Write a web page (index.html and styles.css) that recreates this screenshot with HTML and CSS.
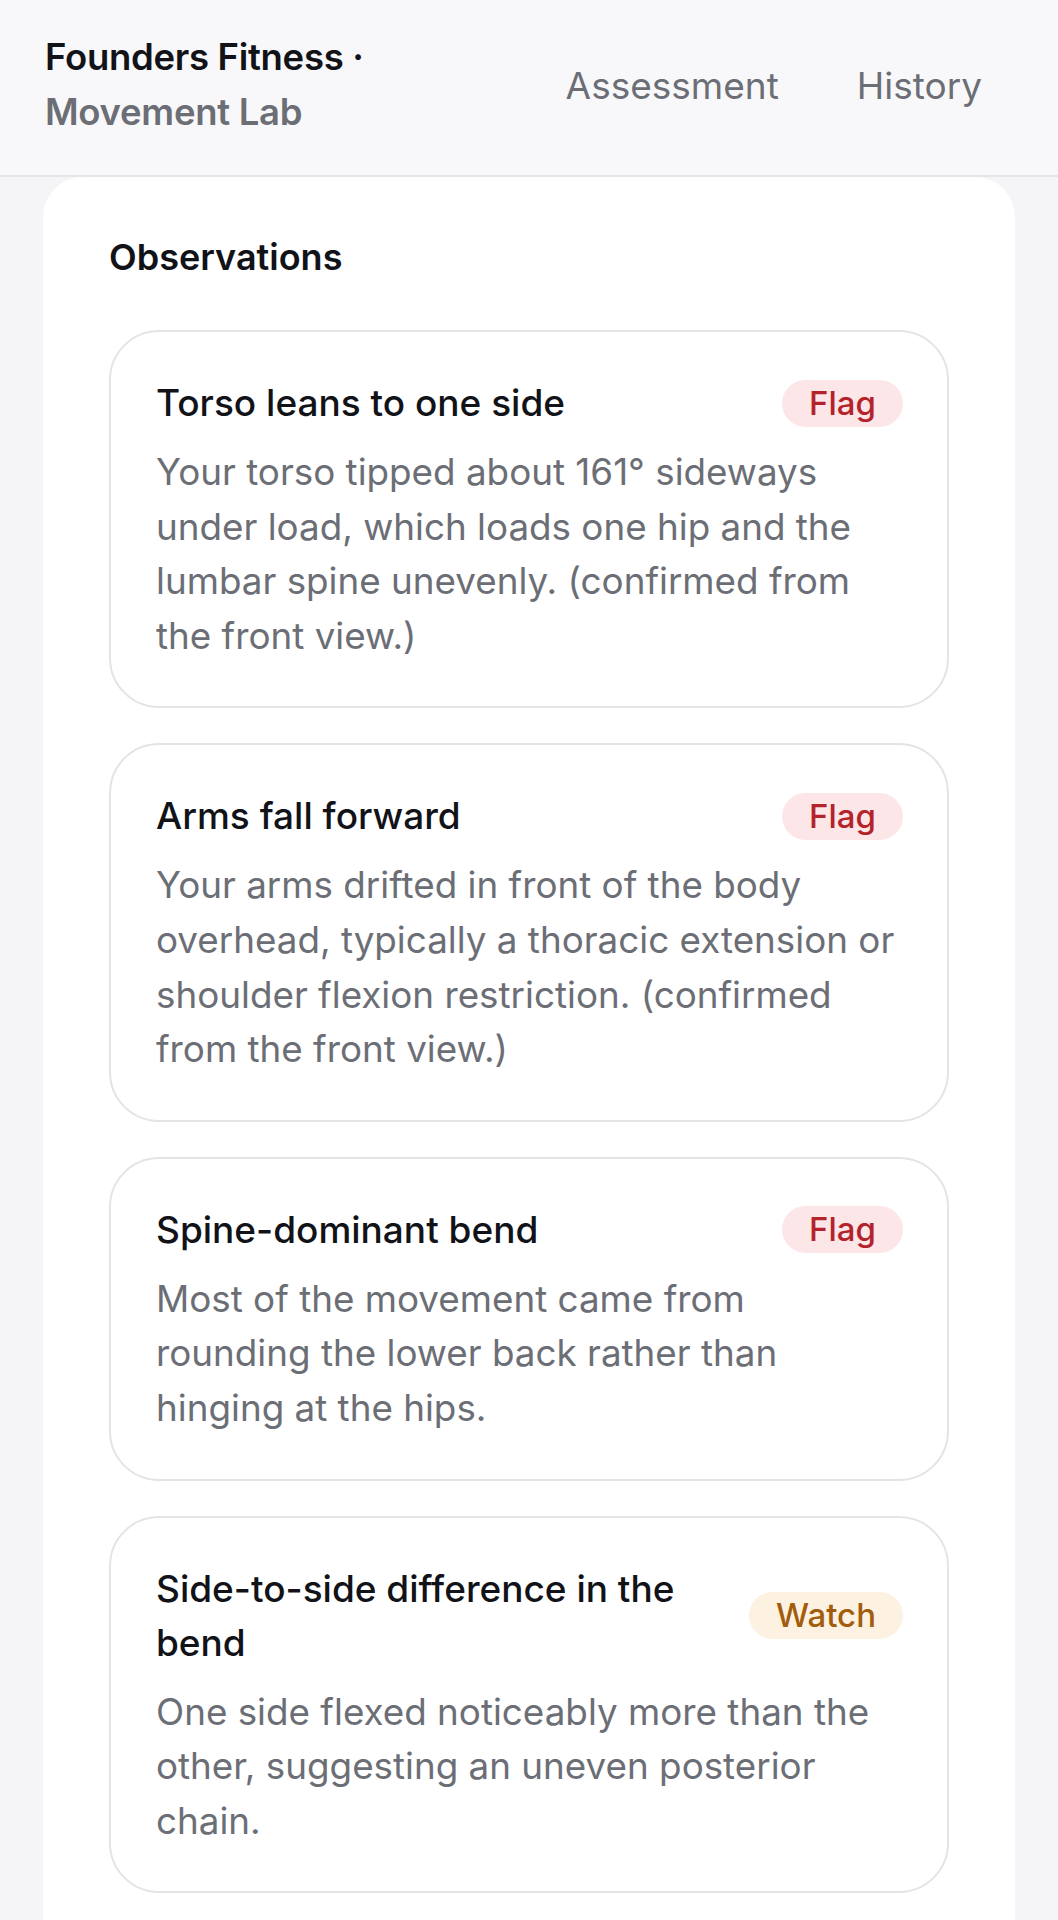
FILE: index.html
```html
<!DOCTYPE html>
<html lang="en">
<head>
    <meta charset="UTF-8">
    <meta name="viewport" content="width=device-width, initial-scale=1.0">
    <title>Founders Fitness · Movement Lab</title>
    <link rel="stylesheet" href="styles.css">
</head>
<body>

    <header class="topbar">
        <div class="brand">Founders Fitness · <span class="brand-sub">Movement Lab</span></div>
        <nav class="nav">
            <a href="#" class="nav-link">Assessment</a>
            <a href="#" class="nav-link">History</a>
        </nav>
    </header>

    <main class="panel">
        <h2 class="panel-title">Observations</h2>

        <div class="obs-list">
            <div class="obs-card">
                <div class="obs-head">
                    <h3 class="obs-title">Torso leans to one side</h3>
                    <span class="badge badge-flag">Flag</span>
                </div>
                <p class="obs-text">Your torso tipped about 161° sideways under load, which loads one hip and the lumbar spine unevenly. (confirmed from the front view.)</p>
            </div>

            <div class="obs-card">
                <div class="obs-head">
                    <h3 class="obs-title">Arms fall forward</h3>
                    <span class="badge badge-flag">Flag</span>
                </div>
                <p class="obs-text">Your arms drifted in front of the body overhead, typically a thoracic extension or shoulder flexion restriction. (confirmed from the front view.)</p>
            </div>

            <div class="obs-card">
                <div class="obs-head">
                    <h3 class="obs-title">Spine-dominant bend</h3>
                    <span class="badge badge-flag">Flag</span>
                </div>
                <p class="obs-text">Most of the movement came from rounding the lower back rather than hinging at the hips.</p>
            </div>

            <div class="obs-card">
                <div class="obs-head">
                    <h3 class="obs-title">Side-to-side difference in the bend</h3>
                    <span class="badge badge-watch">Watch</span>
                </div>
                <p class="obs-text">One side flexed noticeably more than the other, suggesting an uneven posterior chain.</p>
            </div>
        </div>
    </main>

</body>
</html>
```

FILE: styles.css
```css
body {
    font-family: Inter, 'Noto Sans', sans-serif;
    margin: 0;
    background-color: #f5f5f7;
    color: #111318;
}

.topbar {
    display: flex;
    align-items: center;
    justify-content: space-between;
    padding: 30px 62px 35px 45px;
    background-color: #f8f8fa;
    border-bottom: 2px solid #e6e6ea;
}

.brand {
    max-width: 420px;
    font-size: 36.5px;
    line-height: 55px;
    font-weight: 600;
    letter-spacing: -0.3px;
}

.brand-sub {
    color: #6c6e76;
}

.nav {
    display: flex;
    gap: 50px;
}

.nav-link {
    padding: 0 14px;
    font-size: 37px;
    color: #6c6e76;
    text-decoration: none;
}

.panel {
    margin: 0 43px;
    padding: 59px 66px 80px;
    background-color: #fff;
    border-radius: 40px 40px 0 0;
}

.panel-title {
    margin: 0 0 52px;
    font-size: 36px;
    line-height: 42px;
    font-weight: 600;
}

.obs-list {
    display: flex;
    flex-direction: column;
    gap: 35px;
}

.obs-card {
    padding: 44px 44px 43px 45px;
    border: 2px solid #e4e4e7;
    border-radius: 50px;
}

.obs-head {
    display: flex;
    align-items: center;
    justify-content: space-between;
    gap: 30px;
    margin-bottom: 15px;
}

.obs-title {
    margin: 0;
    font-size: 37px;
    line-height: 54px;
    font-weight: 500;
}

.obs-text {
    margin: 0;
    font-size: 36.8px;
    line-height: 54.6px;
    color: #6c6e76;
}

.badge {
    flex-shrink: 0;
    padding: 0 27px;
    border-radius: 24px;
    font-size: 33px;
    line-height: 47px;
    font-weight: 500;
}

.badge-flag {
    background-color: #fde6e7;
    color: #b4232c;
}

.badge-watch {
    background-color: #fdf1e2;
    color: #a15c0c;
}
```
